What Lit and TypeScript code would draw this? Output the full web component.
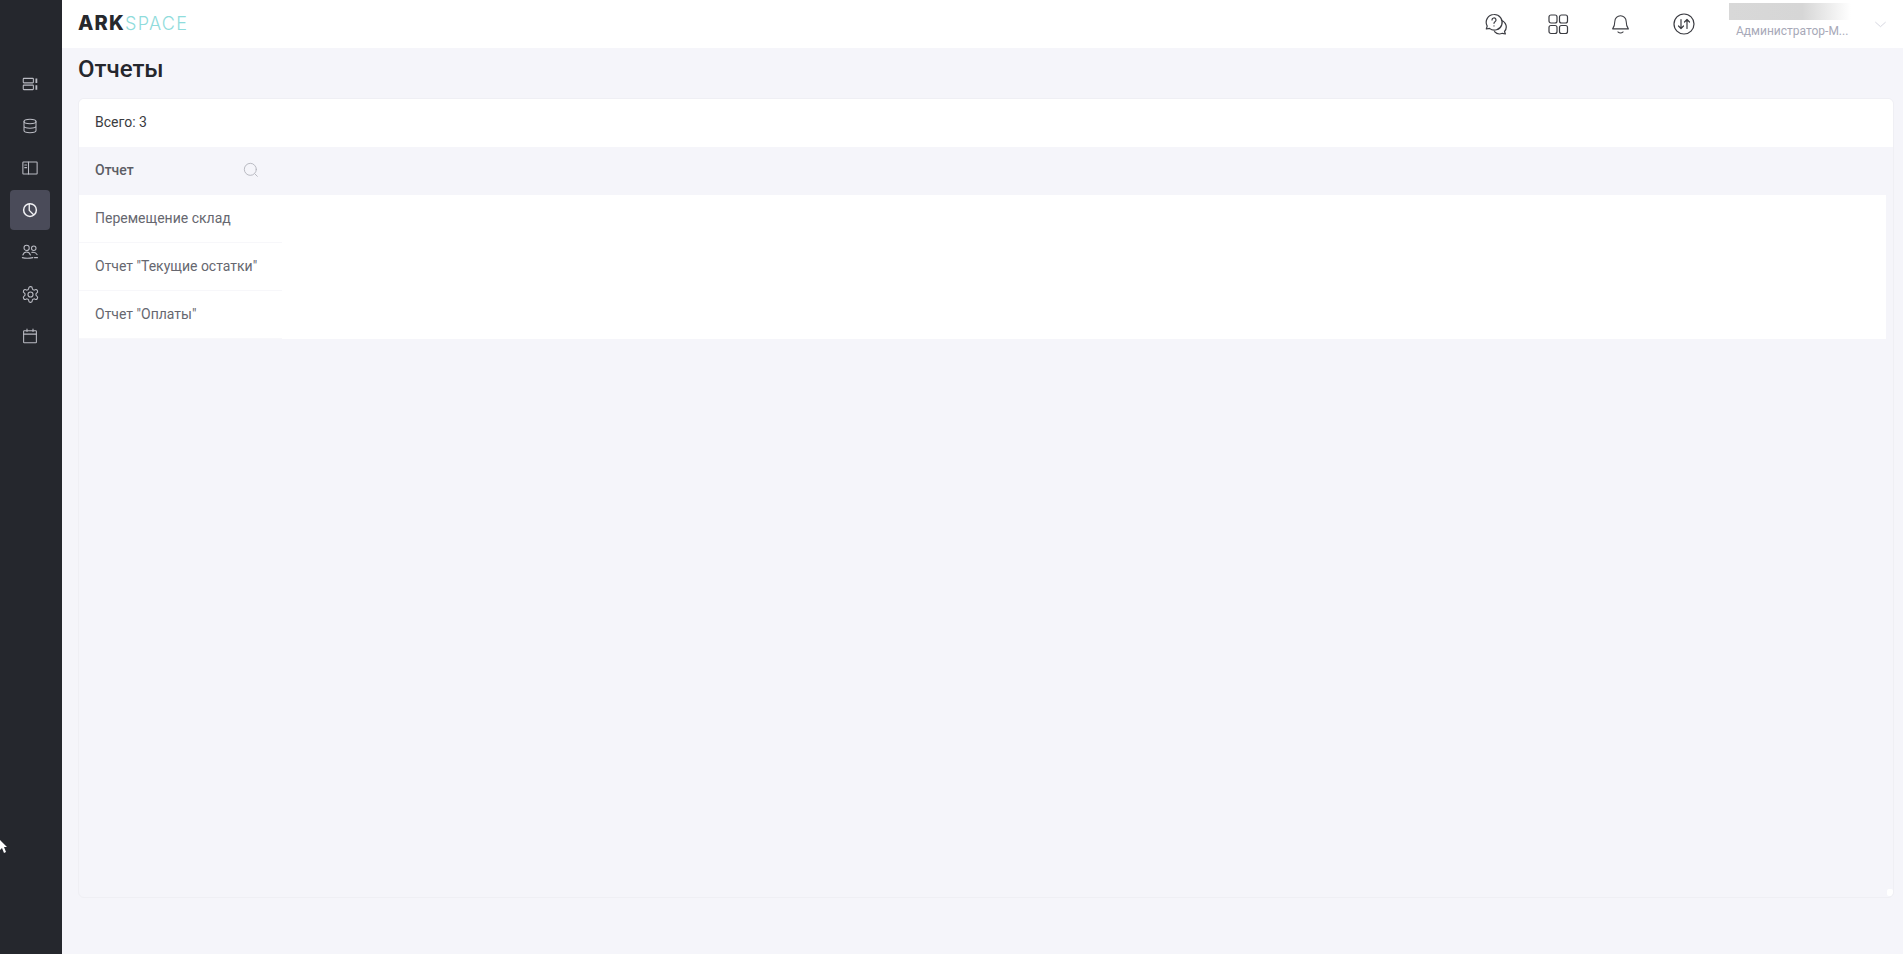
import { LitElement, html, css, svg } from "lit";
import { customElement } from "lit/decorators.js";

const ic = (body: unknown, size = 18) => html`<svg class="ic" width=${size} height=${size} viewBox="0 0 24 24" fill="none" stroke="currentColor" stroke-width="1.4" stroke-linecap="round" stroke-linejoin="round">${body}</svg>`;

const gear = "M12.220 2h-.44a2 2 0 0 0-2 2v.18a2 2 0 0 1-1 1.730l-.43.25a2 2 0 0 1-2 0l-.15-.08a2 2 0 0 0-2.730.73l-.22.38a2 2 0 0 0 .73 2.730l.15.1a2 2 0 0 1 1 1.720v.51a2 2 0 0 1-1 1.740l-.15.09a2 2 0 0 0-.73 2.730l.22.38a2 2 0 0 0 2.730.73l.15-.08a2 2 0 0 1 2 0l.43.25a2 2 0 0 1 1 1.730V20a2 2 0 0 0 2 2h.44a2 2 0 0 0 2-2v-.18a2 2 0 0 1 1-1.730l.43-.25a2 2 0 0 1 2 0l.15.08a2 2 0 0 0 2.730-.73l.22-.39a2 2 0 0 0-.73-2.730l-.15-.08a2 2 0 0 1-1-1.740v-.5a2 2 0 0 1 1-1.740l.15-.09a2 2 0 0 0 .73-2.730l-.22-.38a2 2 0 0 0-2.730-.73l-.15.08a2 2 0 0 1-2 0l-.43-.25a2 2 0 0 1-1-1.730V4a2 2 0 0 0-2-2z";

const sideIcons = [
  svg`<rect x="3" y="4.500" width="13.500" height="6" rx=".8"/><rect x="3" y="13.500" width="13.500" height="6" rx=".8"/><path d="M20.500 4.500v6M20.500 13.500v6" stroke-width="2.400" stroke-linecap="butt"/>`,
  svg`<ellipse cx="12" cy="6" rx="8" ry="3"/><path d="M4 6v12c0 1.700 3.600 3 8 3s8-1.300 8-3V6M4 12c0 1.700 3.600 3 8 3s8-1.300 8-3"/>`,
  svg`<rect x="2.500" y="4" width="19" height="16" rx=".8"/><path d="M10 4v16M5 8h2.500M5 11.500h2.500"/>`,
  svg`<circle cx="12" cy="12" r="8.500" stroke-width="2"/><path d="M11 4v8.500l5.500 5.500" stroke-width="1.800"/>`,
  svg`<circle cx="7.500" cy="6.500" r="3.500"/><circle cx="17" cy="7" r="3"/><path d="M2.500 16c.8-2.600 2.600-4 5-4s4.200 1.400 5 4M14.500 12.500c2.800-.4 5.800.6 7 3M1.800 19.500c4 1.200 9 1.200 14 0M18 19.500h4"/>`,
  svg`<path d=${gear}/><circle cx="12" cy="12" r="3.200"/>`,
  svg`<rect x="3.500" y="5" width="17" height="16" rx=".8"/><path d="M3.500 9.500h17M8 2.800V6M16 2.800V6"/>`,
];

const rows = ["Перемещение склад", 'Отчет "Текущие остатки"', 'Отчет "Оплаты"'];

@customElement("app-root")
export class AppRoot extends LitElement {
  static styles = css`
    :host { display: flex; height: 100vh; overflow: hidden; font-family: Roboto, "Liberation Sans", sans-serif; background: #f5f5fa; position: relative; }
    .side { width: 62px; flex: none; background: #25272d; padding: 63px 2px 0 0; box-sizing: border-box; display: flex; flex-direction: column; align-items: center; color: #babbc3; }
    .si { width: 40px; height: 40px; margin: 1px 0; display: flex; align-items: center; justify-content: center; border-radius: 4px; }
    .si.on { background: #4a4b59; color: #f1f1f4; }
    .main { flex: 1; min-width: 0; display: flex; flex-direction: column; }
    .top { height: 48px; flex: none; background: #fff; display: flex; align-items: center; padding-left: 16px; }
    .logo { font-family: Inter, "Liberation Sans", sans-serif; line-height: 1; display: flex; align-items: baseline; padding-bottom: 2px; }
    .ark { font-size: 20px; font-weight: 800; color: #26282d; letter-spacing: 1.200px; }
    .space { font-size: 18px; font-weight: 300; color: #8fdcdc; letter-spacing: 1.300px; }
    .tools { margin-left: auto; display: flex; align-items: center; color: #3b3c42; }
    .tool { width: 62.700px; display: flex; justify-content: center; }
    .tool svg { stroke-width: 1.200; }
    .user { width: 128px; margin-left: 14px; display: flex; flex-direction: column; align-self: flex-start; }
    .blur { height: 17px; width: 122px; margin-top: 3px; background: linear-gradient(90deg, #d8d8d8 0%, #d6d6d6 60%, #fff 100%); }
    .role { font-size: 12px; line-height: 16px; margin: 3px 0 0 7px; color: #a7a9b8; white-space: nowrap; }
    .chev { width: 46px; display: flex; justify-content: center; color: #c9cad6; align-self: center; }
    .body { flex: 1; display: flex; flex-direction: column; padding: 0 9px 56px 16px; min-height: 0; }
    h1 { margin: 0; height: 50px; font-size: 24px; line-height: 42px; font-weight: 500; color: #25272d; }
    .card { flex: 1; border: 1px solid #efeff4; border-radius: 6px; display: flex; flex-direction: column; overflow: hidden; position: relative; }
    .total { height: 48px; flex: none; box-sizing: border-box; padding: 0 0 2px 16px; background: #fff; display: flex; align-items: center; font-size: 14px; color: #3a3b40; }
    .head { height: 48px; flex: none; box-sizing: border-box; padding-bottom: 2px; display: flex; align-items: center; font-size: 14px; font-weight: 500; color: #5c5d65; }
    .hcell { width: 203px; box-sizing: border-box; padding: 0 16px; display: flex; justify-content: space-between; align-items: center; }
    .search { color: #b5b6bd; display: flex; margin-right: 7px; }
    .tbl { display: flex; margin-right: 7px; background: #fff; }
    .col { width: 203px; flex: none; }
    .row { height: 48px; box-sizing: border-box; display: flex; align-items: center; padding: 0 0 2px 16px; font-size: 14px; color: #66676f; border-bottom: 1px solid #f7f7fa; white-space: nowrap; }
    .fill { flex: 1; }
    .corner { position: absolute; right: 0; bottom: 1px; width: 6px; height: 7px; background: #fff; border-radius: 2px; }
    .cursor { position: absolute; left: 0; top: 840px; }
  `;

  render() {
    return html`
      <nav class="side">
        ${sideIcons.map((b, i) => html`<div class="si ${i === 3 ? "on" : ""}">${ic(b, i === 5 ? 19 : 18)}</div>`)}
      </nav>
      <div class="main">
        <header class="top">
          <div class="logo"><span class="ark">ARK</span><span class="space">SPACE</span></div>
          <div class="tools">
            <div class="tool">${ic(svg`<path d="M10 2.500a7.800 7.800 0 0 0-6.800 11.600L2.300 17l3.200-.6A7.800 7.800 0 1 0 10 2.500z"/><path d="M17.500 8.500a6.800 6.800 0 0 1 3 11l.9 2.500-3-.7a7 7 0 0 1-7.900-1.600"/><path d="M8 8a2 2 0 1 1 3 1.700c-.7.400-1 .9-1 1.600M10 13.800v.1"/>`, 24)}</div>
            <div class="tool">${ic(svg`<rect x="3" y="3" width="8" height="8" rx="2"/><rect x="13.500" y="3" width="8" height="8" rx="2"/><rect x="3" y="13.500" width="8" height="8" rx="2"/><rect x="13.500" y="13.500" width="8" height="8" rx="2"/>`, 24)}</div>
            <div class="tool">${ic(svg`<path d="M12 2a6.500 6.500 0 0 0-6.500 6.500c0 5-2.500 8.500-2.500 8.500h18s-2.500-3.500-2.500-8.500A6.500 6.500 0 0 0 12 2z"/><path d="M9 20.500c1.700 1.400 4.300 1.400 6 0"/>`, 21)}</div>
            <div class="tool">${ic(svg`<circle cx="12" cy="12" r="10"/><path d="M9 7.500v9M6.500 14l2.500 2.500 2.500-2.500M15 16.500v-9M12.500 10L15 7.500l2.500 2.500"/>`, 24)}</div>
          </div>
          <div class="user"><div class="blur"></div><div class="role">Администратор-М...</div></div>
          <div class="chev">${ic(svg`<path d="M3 8l9 8 9-8"/>`, 13)}</div>
        </header>
        <div class="body">
          <h1>Отчеты</h1>
          <section class="card">
            <div class="total">Всего: 3</div>
            <div class="head">
              <div class="hcell">Отчет <span class="search">${ic(svg`<circle cx="11" cy="11" r="9"/><path d="M18 18l3.500 3.500"/>`, 16)}</span></div>
            </div>
            <div class="tbl">
              <div class="col">${rows.map((r) => html`<div class="row">${r}</div>`)}</div>
              <div class="fill"></div>
            </div>
            <div class="corner"></div>
          </section>
        </div>
      </div>
      <svg class="cursor" width="8" height="14" viewBox="0 0 8 14"><path d="M0 0l7 7H4l2 5-2 1-2-5-2 2z" fill="#fff"/></svg>
    `;
  }
}
